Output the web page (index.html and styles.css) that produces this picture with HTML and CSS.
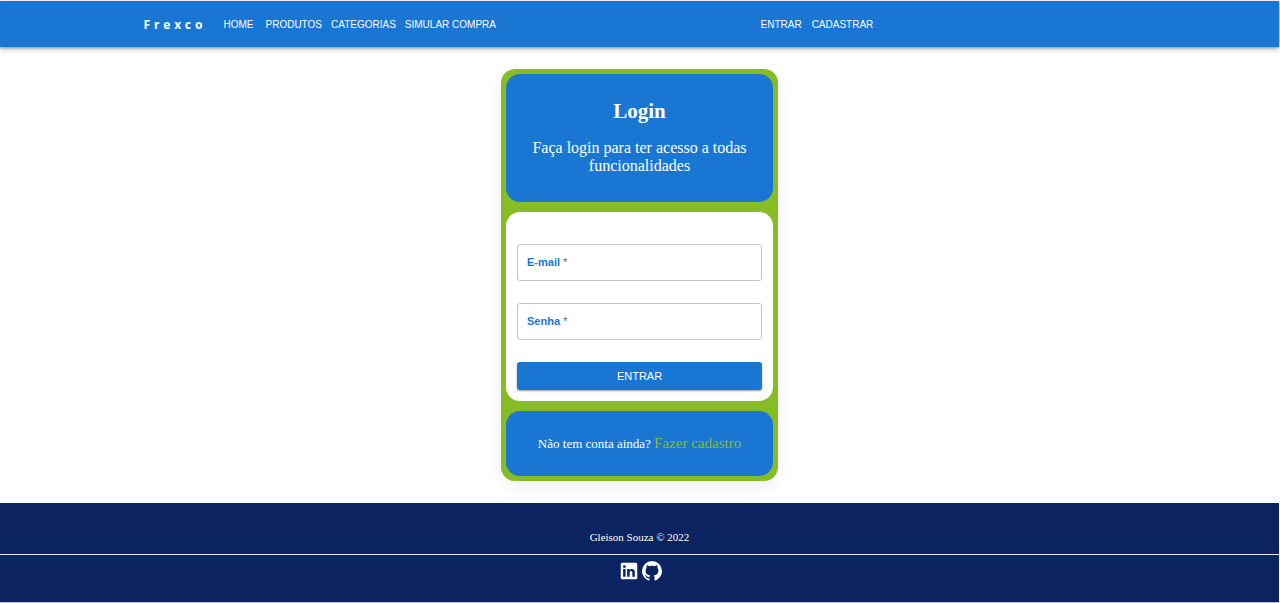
FILE: index.html
```html
<!DOCTYPE html>
<html lang="pt-BR">
<head>
<meta charset="utf-8">
<meta name="viewport" content="width=device-width, initial-scale=1">
<title>Frexco - Login</title>
<link rel="stylesheet" href="styles.css">
</head>
<body>
<header class="topbar">
  <div class="topbar-inner">
    <a class="brand" href="#">Frexco</a>
    <nav class="menu" aria-label="Principal">
      <a class="menu-home" href="#">HOME</a>
      <a href="#">PRODUTOS</a>
      <a href="#">CATEGORIAS</a>
      <a href="#">SIMULAR COMPRA</a>
    </nav>
    <nav class="menu account" aria-label="Conta">
      <a href="#">ENTRAR</a>
      <a href="#">CADASTRAR</a>
    </nav>
  </div>
</header>
<main class="content">
  <section class="card">
    <div class="panel intro">
      <h1>Login</h1>
      <p>Faça login para ter acesso a todas funcionalidades</p>
    </div>
    <form class="panel form">
      <div class="field">
        <input id="email" type="email" required>
        <label for="email">E-mail <span class="required">*</span></label>
      </div>
      <div class="field">
        <input id="senha" type="password" required>
        <label for="senha">Senha <span class="required">*</span></label>
      </div>
      <button class="submit" type="submit">ENTRAR</button>
    </form>
    <div class="panel signup">
      <p>Não tem conta ainda? <a href="#">Fazer cadastro</a></p>
    </div>
  </section>
</main>
<footer class="footer">
  <p>Gleison Souza © 2022</p>
  <div class="social">
    <a href="#" aria-label="LinkedIn"><svg width="22" height="22" viewBox="0 0 24 24"><path fill-rule="evenodd" d="M4.500 3h15A1.500 1.500 0 0 1 21 4.500v15a1.500 1.500 0 0 1-1.500 1.500h-15A1.500 1.500 0 0 1 3 19.500v-15A1.500 1.500 0 0 1 4.500 3zM5.600 9.900v8.400h2.700V9.900zM6.950 5.600a1.570 1.570 0 1 0 0 3.140 1.570 1.570 0 0 0 0-3.140zM10 9.900v8.400h2.700v-4.200c0-1.100.3-2.100 1.600-2.100s1.350 1.200 1.350 2.200v4.100h2.700v-4.600c0-2.300-.5-4-3.150-4-1.250 0-2.100.7-2.450 1.350h-.1V9.900z"/></svg></a>
    <a href="#" aria-label="GitHub"><svg width="24" height="24" viewBox="0 0 24 24"><path d="M12 2A10 10 0 0 0 2 12c0 4.420 2.870 8.170 6.840 9.500.5.080.66-.23.66-.5v-1.690c-2.770.6-3.360-1.340-3.360-1.340-.46-1.160-1.110-1.470-1.110-1.470-.91-.62.070-.6.070-.6 1 .07 1.530 1.030 1.530 1.030.87 1.520 2.340 1.070 2.910.83.090-.65.350-1.090.63-1.340-2.220-.25-4.550-1.110-4.550-4.920 0-1.110.38-2 1.030-2.710-.1-.25-.45-1.290.1-2.640 0 0 .84-.27 2.750 1.020.79-.22 1.650-.33 2.500-.33.85 0 1.710.11 2.500.33 1.910-1.290 2.750-1.020 2.750-1.020.55 1.350.2 2.390.1 2.640.65.71 1.030 1.600 1.030 2.710 0 3.820-2.340 4.660-4.570 4.910.36.310.69.920.69 1.850V21c0 .27.16.59.67.5C19.140 20.160 22 16.420 22 12A10 10 0 0 0 12 2z"/></svg></a>
  </div>
</footer>
</body>
</html>
```
FILE: styles.css
```css
* { box-sizing: border-box; }

body {
  margin: 0;
  padding: 1px 1px 0 0;
  background: #fff;
  color: #fff;
  font-family: "Liberation Serif", "Times New Roman", serif;
}

h1, p { margin: 0; }
a { color: inherit; text-decoration: none; }

.topbar {
  background: #1976d2;
  box-shadow: 0 1px 3px rgba(0, 0, 0, .35), 0 3px 6px rgba(0, 0, 0, .16);
  font-family: "Liberation Sans", Arial, sans-serif;
  font-size: 10px;
}

.topbar-inner {
  display: flex;
  align-items: center;
  max-width: 992px;
  min-height: 46px;
  margin: 0 auto;
}

.brand {
  width: 80px;
  font-family: "Noto Sans", sans-serif;
  font-size: 12px;
  font-weight: 700;
  letter-spacing: 4px;
}

.menu { display: flex; flex: 537; gap: 9px; white-space: nowrap; }
.menu-home { margin-right: 3px; }
.account { flex: 375; gap: 10px; }

.content { display: flex; justify-content: center; padding: 22px 0; }

.card {
  display: flex;
  flex-direction: column;
  gap: 10px;
  width: 277px;
  padding: 5px;
  border-radius: 14px;
  background: #86bc25;
  box-shadow: 0 5px 20px rgba(0, 0, 0, .07);
}

.panel { border-radius: 14px; background: #1976d2; text-align: center; }

.intro { padding: 25px 16px 27px; }
.intro h1 { margin-bottom: 16px; font-size: 21px; line-height: 24px; }
.intro p { font-size: 16px; line-height: 18px; }

.form {
  display: flex;
  flex-direction: column;
  gap: 22px;
  padding: 32px 11px 11px;
  background: #fff;
  font-family: "Liberation Sans", Arial, sans-serif;
}

.field { position: relative; display: flex; }

.field input {
  width: 100%;
  height: 37px;
  padding: 0 9px;
  border: 1px solid #c4c4c4;
  border-radius: 3px;
  background: #fff;
  font: 11px "Liberation Sans", Arial, sans-serif;
}

.field label {
  position: absolute;
  top: 0;
  left: 10px;
  color: #1976d2;
  font-size: 11px;
  font-weight: 700;
  line-height: 37px;
  pointer-events: none;
}

.field input:focus + label,
.field input:valid + label { top: -18px; }
.required { font-weight: 400; }

.submit {
  height: 28px;
  padding: 0;
  border: 0;
  border-radius: 3px;
  background: #1976d2;
  box-shadow: 0 1px 2px rgba(0, 0, 0, .4);
  color: #fff;
  font: 11px "Liberation Sans", Arial, sans-serif;
}

.signup { padding: 22px 12px; font-size: 13px; line-height: 21px; }
.signup a { color: #86bc25; font-size: 15px; }

.footer {
  padding-top: 26px;
  background: #0b2361;
  border-bottom: 1px solid #b5bfda;
  text-align: center;
}

.footer p {
  padding-bottom: 9px;
  border-bottom: 1px solid #e4e8f3;
  font-size: 11px;
  line-height: 16px;
}

.social {
  display: flex;
  align-items: center;
  justify-content: center;
  padding: 4px 0 19px 2px;
}

.social a { display: flex; }
.social svg { fill: #fff; }
```
